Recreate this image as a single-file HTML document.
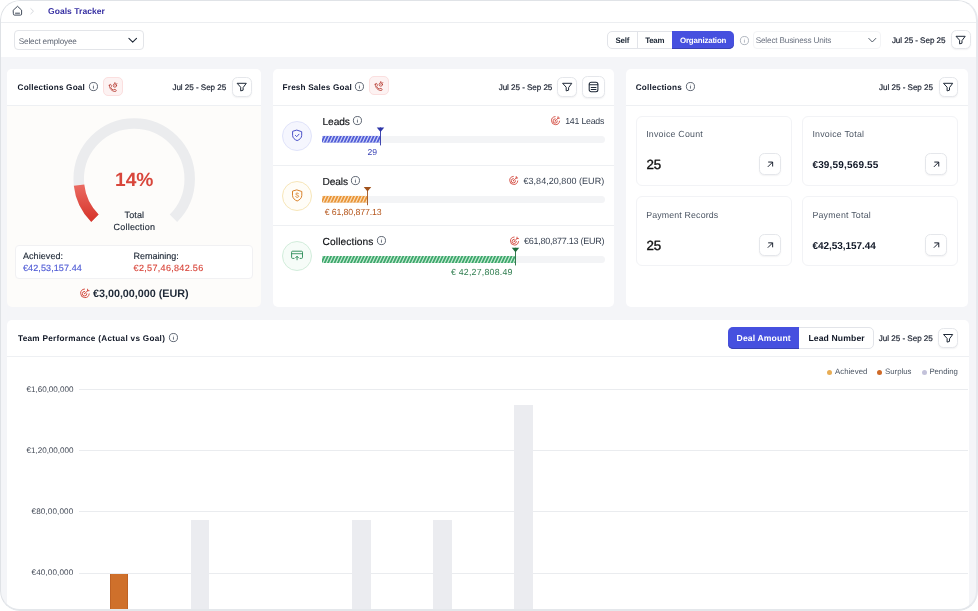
<!DOCTYPE html>
<html lang="en"><head><meta charset="utf-8"><title>Goals Tracker</title>
<style>
*{box-sizing:border-box;margin:0;padding:0}
html,body{width:978px;height:611px;background:#fff;overflow:hidden}
body{font-family:"Liberation Sans",sans-serif;position:relative}
#frame{position:absolute;left:0;top:0;width:978px;height:611px;border-radius:20px;overflow:hidden;background:#f4f5f8}
#frame:after{content:"";position:absolute;left:0;top:0;right:0;bottom:0;border:solid #e2e5e9;border-color:#e0e3e7 #e7e9ee #e4e7eb #dfe2e6;border-width:1px 2px 2.4px 1.4px;border-radius:20px;pointer-events:none;z-index:50}
.abs,.btn,.rbtn,.sub,.circ,.dot,svg{position:absolute}
.btn{background:#fff;border:1px solid #e5e7eb;border-radius:4.5px;box-shadow:0 1px 1.5px rgba(16,24,40,.05)}
.rbtn{background:#fdf2f2;border:1px solid #fbdfdf;border-radius:5px}
.sub{background:#fff;border:1px solid #f2f3f6;border-radius:6px}
.circ{border-radius:50%;border:1px solid}
.dot{width:5px;height:5px;border-radius:50%}
#gfx{left:0;top:0;z-index:5}
#txt{left:0;top:0;width:978px;height:611px;z-index:10;will-change:transform;text-rendering:geometricPrecision}

</style></head>
<body>
<div id="frame">
<div class="abs" style="left:0.00px;top:0.00px;width:978.00px;height:22.00px;background:#fff"></div>
<div class="abs" style="left:0.00px;top:22.00px;width:978.00px;height:1.00px;background:#eceef1"></div>
<div class="abs" style="left:0.00px;top:23.00px;width:978.00px;height:34.00px;background:#fff"></div>
<div class="abs" style="left:14.30px;top:30.30px;width:130.10px;height:19.40px;border:1px solid #e3e5e9;border-radius:4px;background:#fff"></div>
<div class="abs" style="left:607.20px;top:31.10px;width:126.80px;height:18.20px;border:1px solid #e2e4e9;border-radius:5px;background:#fff"></div>
<div class="abs" style="left:637.00px;top:31.60px;width:1.00px;height:17.20px;background:#e2e4e9"></div>
<div class="abs" style="left:672.20px;top:31.10px;width:61.80px;height:18.20px;background:#4650df;border-radius:0 5px 5px 0;box-shadow:inset 0 -1px 0 #3a41b4"></div>
<div class="abs" style="left:753.20px;top:31.00px;width:127.90px;height:18.10px;border:1px solid #f3f4f6;border-radius:4px;background:#fff"></div>
<div class="btn" style="left:951.00px;top:30.20px;width:19.50px;height:19.30px;border-radius:5.5px"></div>
<div class="abs" style="left:7.00px;top:69.00px;width:254.00px;height:238.20px;background:#fdfcfa;border-radius:5px"></div>
<div class="abs" style="left:7.00px;top:69.00px;width:254.00px;height:36.00px;background:#fff;border-radius:5px 5px 0 0"></div>
<div class="abs" style="left:7.00px;top:105.00px;width:254.00px;height:1.00px;background:#eef0f3"></div>
<div class="rbtn" style="left:103.30px;top:77.00px;width:19.40px;height:19.40px"></div>
<div class="btn" style="left:232.00px;top:77.30px;width:19.70px;height:19.50px;border-radius:5.5px"></div>
<div class="abs" style="left:15.00px;top:245.00px;width:238.00px;height:34.00px;background:#fff;border:1px solid #f1f1f3;border-radius:4px"></div>
<div class="abs" style="left:272.80px;top:69.00px;width:341.20px;height:238.20px;background:#fff;border-radius:5px"></div>
<div class="abs" style="left:272.80px;top:105.00px;width:341.20px;height:1.00px;background:#eef0f3"></div>
<div class="abs" style="left:272.80px;top:165.00px;width:341.20px;height:1.00px;background:#eef0f3"></div>
<div class="abs" style="left:272.80px;top:225.00px;width:341.20px;height:1.00px;background:#eef0f3"></div>
<div class="rbtn" style="left:369.20px;top:76.00px;width:19.40px;height:19.30px"></div>
<div class="btn" style="left:557.40px;top:77.20px;width:19.90px;height:19.60px;border-radius:5.5px"></div>
<div class="btn" style="left:582.40px;top:75.70px;width:22.20px;height:22.00px;border-radius:5.5px"></div>
<div class="circ" style="left:282.3px;top:120.7px;width:30px;height:30px;background:#f5f6fe;border-color:#e0e3fa"></div>
<div class="abs" style="left:322.00px;top:135.80px;width:282.80px;height:7.00px;background:#f3f4f6;border-radius:3.5px"></div>
<div class="circ" style="left:282.3px;top:180.5px;width:30px;height:30px;background:#fffdf7;border-color:#f7e6b8"></div>
<div class="abs" style="left:322.00px;top:195.80px;width:282.80px;height:7.00px;background:#f3f4f6;border-radius:3.5px"></div>
<div class="circ" style="left:282.3px;top:240.8px;width:30px;height:30px;background:#f6fcf8;border-color:#d2eddb"></div>
<div class="abs" style="left:322.00px;top:256.00px;width:282.80px;height:7.00px;background:#f3f4f6;border-radius:3.5px"></div>
<div class="abs" style="left:626.20px;top:69.00px;width:342.30px;height:238.20px;background:#fff;border-radius:5px"></div>
<div class="abs" style="left:626.20px;top:105.00px;width:342.30px;height:1.00px;background:#eef0f3"></div>
<div class="btn" style="left:938.50px;top:77.30px;width:19.60px;height:19.50px;border-radius:5.5px"></div>
<div class="sub" style="left:635.5px;top:115.6px;width:156.0px;height:70.2px"></div>
<div class="sub" style="left:635.5px;top:196.3px;width:156.0px;height:70.1px"></div>
<div class="sub" style="left:801.5px;top:115.6px;width:156.6px;height:70.2px"></div>
<div class="sub" style="left:801.5px;top:196.3px;width:156.6px;height:70.1px"></div>
<div class="btn" style="left:759.10px;top:153.10px;width:22.20px;height:22.40px;border-radius:5.5px"></div>
<div class="btn" style="left:759.10px;top:233.90px;width:22.20px;height:22.40px;border-radius:5.5px"></div>
<div class="btn" style="left:925.20px;top:153.10px;width:22.20px;height:22.40px;border-radius:5.5px"></div>
<div class="btn" style="left:925.20px;top:233.90px;width:22.20px;height:22.40px;border-radius:5.5px"></div>
<div class="abs" style="left:7.00px;top:320.00px;width:961.50px;height:320.00px;background:#fff;border-radius:5px"></div>
<div class="abs" style="left:7.00px;top:356.20px;width:961.50px;height:1.00px;background:#eef0f3"></div>
<div class="abs" style="left:728.00px;top:326.70px;width:145.50px;height:22.60px;border:1px solid #e2e4e9;border-radius:5px;background:#fff"></div>
<div class="abs" style="left:728.00px;top:326.70px;width:71.40px;height:22.60px;background:#4650df;border-radius:5px 0 0 5px;box-shadow:inset 0 -1px 0 #3a41b4"></div>
<div class="btn" style="left:938.40px;top:328.40px;width:19.60px;height:19.40px;border-radius:5.5px"></div>
<div class="dot" style="left:827.4px;top:369.5px;background:#e8ad55"></div>
<div class="dot" style="left:877.4px;top:369.5px;background:#cf6a28"></div>
<div class="dot" style="left:921.5px;top:369.5px;background:#c3c2da"></div>
<div class="abs" style="left:78.70px;top:389.00px;width:889.80px;height:1.00px;background:#eaecef"></div>
<div class="abs" style="left:78.70px;top:450.00px;width:889.80px;height:1.00px;background:#eaecef"></div>
<div class="abs" style="left:78.70px;top:511.00px;width:889.80px;height:1.00px;background:#eaecef"></div>
<div class="abs" style="left:78.70px;top:573.00px;width:889.80px;height:1.00px;background:#eaecef"></div>
<div class="abs" style="left:109.90px;top:574.00px;width:18.10px;height:66.00px;background:#cf702b;border-left:1px solid #bf6224;border-right:1px solid #bf6224"></div>
<div class="abs" style="left:190.70px;top:520.40px;width:18.60px;height:119.60px;background:#ebecf0"></div>
<div class="abs" style="left:352.30px;top:520.40px;width:18.60px;height:119.60px;background:#ebecf0"></div>
<div class="abs" style="left:433.00px;top:520.40px;width:18.60px;height:119.60px;background:#ebecf0"></div>
<div class="abs" style="left:514.10px;top:404.80px;width:18.70px;height:235.20px;background:#ebecf0"></div>
<svg id="gfx" width="978" height="611" viewBox="0 0 978 611">
<g transform="translate(11.50 4.80)" fill="none" stroke="#374151" stroke-width="0.95" stroke-linejoin="round" stroke-linecap="round"><path d="M1.9 5.3 L6 1.5 L10.1 5.3 V9.3 a1 1 0 0 1 -1 1 H2.9 a1 1 0 0 1 -1 -1 Z"/><path d="M4.0 8.4 H8.0"/></g>
<g transform="translate(29.60 7.80)" fill="none" stroke="#d5d8dd" stroke-width="1" stroke-linecap="round" stroke-linejoin="round"><path d="M1.2 0.8 L3.9 3.4 L1.2 6"/></g>
<g transform="translate(127.90 37.40)" fill="none" stroke="#1f2937" stroke-width="1.1" stroke-linecap="round" stroke-linejoin="round"><path d="M1 1 L4.8 4.8 L8.6 1"/></g>
<g transform="translate(739.45 35.55)" fill="none" stroke="#9ca3af" stroke-width="0.8"><circle cx="5" cy="5" r="4.05"/><path d="M5 4.95 V6.7" stroke-linecap="round" stroke-width="0.75"/><circle cx="5" cy="3.5" r="0.42" fill="#9ca3af" stroke="none"/></g>
<g transform="translate(867.80 37.40)" fill="none" stroke="#4b5563" stroke-width="0.95" stroke-linecap="round" stroke-linejoin="round"><path d="M1 1 L4.5 4.6 L8.0 1"/></g>
<g transform="translate(955.30 35.00)" fill="none" stroke="#1f2937" stroke-width="1.0" stroke-linejoin="round" stroke-linecap="round"><path d="M1.1 1.3 H9.9 L6.7 5.6 V8.2 L4.3 8.9 V5.6 Z"/></g>
<g transform="translate(88.45 81.55)" fill="none" stroke="#374151" stroke-width="0.8"><circle cx="5" cy="5" r="4.05"/><path d="M5 4.95 V6.7" stroke-linecap="round" stroke-width="0.75"/><circle cx="5" cy="3.5" r="0.42" fill="#374151" stroke="none"/></g>
<g transform="translate(108.30 81.60)" fill="none" stroke="#b53a30" stroke-width="0.8" stroke-linecap="round" stroke-linejoin="round"><path d="M1.0 3.7 C0.9 2.6 2.7 2.4 2.9 3.5 L3.1 5.0 L2.4 5.7 C2.9 7.0 3.7 7.9 5.0 8.4 L5.7 7.7 L7.2 8.0 C8.3 8.2 8.1 10.0 7.0 9.9 C3.6 9.8 1.1 7.2 1.0 3.7 Z"/><circle cx="6.6" cy="3.9" r="1.7"/><circle cx="6.6" cy="3.9" r="0.45" fill="#b53a30" stroke="none"/><path d="M6.6 2.1 V0.9 M7.9 2.6 L8.6 1.9"/></g>
<g transform="translate(236.40 82.00)" fill="none" stroke="#1f2937" stroke-width="1.0" stroke-linejoin="round" stroke-linecap="round"><path d="M1.1 1.3 H9.9 L6.7 5.6 V8.2 L4.3 8.9 V5.6 Z"/></g>
<g transform="translate(64.00 110.00) translate(-64.00 -110.00)" fill="none">
<defs><linearGradient id="rg" x1="0" y1="0" x2="0" y2="1"><stop offset="0" stop-color="#ea6a61"/><stop offset="1" stop-color="#d8382e"/></linearGradient></defs>
<path d="M94.96 218.24 A55.5 55.5 0 1 1 173.44 218.24" stroke="#ebecee" stroke-width="10.5"/>
<path d="M94.96 218.24 A55.5 55.5 0 0 1 79.04 185.2" stroke="url(#rg)" stroke-width="10.5"/>
</g>
<g transform="translate(79.90 288.30)" fill="none" stroke="#d2473b" stroke-width="0.95" stroke-linecap="round"><path d="M9.3 5.6 A4.3 4.3 0 1 1 4.6 0.75"/><path d="M7.0 5.4 A2.3 2.3 0 1 1 4.8 3.1"/><circle cx="4.8" cy="5.3" r="0.7" fill="#d2473b" stroke="none"/><path d="M4.9 5.2 L7.6 2.5 M7.7 2.4 V0.9 M7.7 2.4 H9.2"/></g>
<g transform="translate(354.45 81.55)" fill="none" stroke="#374151" stroke-width="0.8"><circle cx="5" cy="5" r="4.05"/><path d="M5 4.95 V6.7" stroke-linecap="round" stroke-width="0.75"/><circle cx="5" cy="3.5" r="0.42" fill="#374151" stroke="none"/></g>
<g transform="translate(374.20 80.60)" fill="none" stroke="#b53a30" stroke-width="0.8" stroke-linecap="round" stroke-linejoin="round"><path d="M1.0 3.7 C0.9 2.6 2.7 2.4 2.9 3.5 L3.1 5.0 L2.4 5.7 C2.9 7.0 3.7 7.9 5.0 8.4 L5.7 7.7 L7.2 8.0 C8.3 8.2 8.1 10.0 7.0 9.9 C3.6 9.8 1.1 7.2 1.0 3.7 Z"/><circle cx="6.6" cy="3.9" r="1.7"/><circle cx="6.6" cy="3.9" r="0.45" fill="#b53a30" stroke="none"/><path d="M6.6 2.1 V0.9 M7.9 2.6 L8.6 1.9"/></g>
<g transform="translate(561.90 82.00)" fill="none" stroke="#1f2937" stroke-width="1.0" stroke-linejoin="round" stroke-linecap="round"><path d="M1.1 1.3 H9.9 L6.7 5.6 V8.2 L4.3 8.9 V5.6 Z"/></g>
<g transform="translate(588.00 81.00)" fill="none" stroke="#1f2937" stroke-width="1.05" stroke-linecap="round"><rect x="1.2" y="1.3" width="8.7" height="9.4" rx="2"/><path d="M1.4 3.8 H9.7 M3.2 6.5 H8 M3.2 8.5 H8"/></g>
<g transform="translate(291.60 129.20)" fill="none" stroke="#4a50c8" stroke-width="1.0" stroke-linecap="round" stroke-linejoin="round"><path d="M5.55 1.0 L10.1 2.5 V6.1 C10.1 8.8 7.9 10.5 5.55 11.4 C3.2 10.5 1.0 8.8 1.0 6.1 V2.5 Z"/><path d="M3.8 6.2 L5.1 7.5 L7.4 5.0"/></g>
<g transform="translate(322.00 135.80)"><defs><clipPath id="cp1"><rect x="0" y="0" width="58.40" height="7.0" rx="1.5"/></clipPath></defs><g clip-path="url(#cp1)"><rect x="0" y="0" width="58.40" height="7.0" fill="#515dd6"/><path d="M-2.50 7.50 L1.25 -0.5 M0.78 7.50 L4.53 -0.5 M4.06 7.50 L7.81 -0.5 M7.34 7.50 L11.09 -0.5 M10.62 7.50 L14.37 -0.5 M13.90 7.50 L17.65 -0.5 M17.18 7.50 L20.93 -0.5 M20.46 7.50 L24.21 -0.5 M23.74 7.50 L27.49 -0.5 M27.02 7.50 L30.77 -0.5 M30.30 7.50 L34.05 -0.5 M33.58 7.50 L37.33 -0.5 M36.86 7.50 L40.61 -0.5 M40.14 7.50 L43.89 -0.5 M43.42 7.50 L47.17 -0.5 M46.70 7.50 L50.45 -0.5 M49.98 7.50 L53.73 -0.5 M53.26 7.50 L57.01 -0.5 M56.54 7.50 L60.29 -0.5" stroke="#cfd4f8" stroke-width="1.2" fill="none"/></g></g>
<g transform="translate(376.50 127.40)"><path d="M0.25 0 H7.75 L4 4.5 Z" fill="#2d35a8"/><rect x="3.55" y="0" width="0.9" height="18.00" fill="#2d35a8"/></g>
<g transform="translate(550.80 115.90) scale(0.9400 0.9400)" fill="none" stroke="#d2473b" stroke-width="0.95" stroke-linecap="round"><path d="M9.3 5.6 A4.3 4.3 0 1 1 4.6 0.75"/><path d="M7.0 5.4 A2.3 2.3 0 1 1 4.8 3.1"/><circle cx="4.8" cy="5.3" r="0.7" fill="#d2473b" stroke="none"/><path d="M4.9 5.2 L7.6 2.5 M7.7 2.4 V0.9 M7.7 2.4 H9.2"/></g>
<g transform="translate(352.45 115.55)" fill="none" stroke="#374151" stroke-width="0.8"><circle cx="5" cy="5" r="4.05"/><path d="M5 4.95 V6.7" stroke-linecap="round" stroke-width="0.75"/><circle cx="5" cy="3.5" r="0.42" fill="#374151" stroke="none"/></g>
<g transform="translate(291.50 189.00)" fill="none" stroke="#d9822b" stroke-width="1.0" stroke-linecap="round" stroke-linejoin="round"><path d="M5.65 1.0 L10.3 2.5 V6.3 C10.3 9.2 8.0 11.0 5.65 12.0 C3.3 11.0 1.0 9.2 1.0 6.3 V2.5 Z"/><path d="M7.1 4.7 C6.7 3.7 4.3 3.8 4.3 5.0 C4.3 6.4 7.2 5.8 7.2 7.3 C7.2 8.6 4.6 8.7 4.1 7.6" stroke-width="0.9"/></g>
<g transform="translate(322.00 195.80)"><defs><clipPath id="cp2"><rect x="0" y="0" width="45.30" height="7.0" rx="1.5"/></clipPath></defs><g clip-path="url(#cp2)"><rect x="0" y="0" width="45.30" height="7.0" fill="#e99538"/><path d="M-2.50 7.50 L1.25 -0.5 M0.78 7.50 L4.53 -0.5 M4.06 7.50 L7.81 -0.5 M7.34 7.50 L11.09 -0.5 M10.62 7.50 L14.37 -0.5 M13.90 7.50 L17.65 -0.5 M17.18 7.50 L20.93 -0.5 M20.46 7.50 L24.21 -0.5 M23.74 7.50 L27.49 -0.5 M27.02 7.50 L30.77 -0.5 M30.30 7.50 L34.05 -0.5 M33.58 7.50 L37.33 -0.5 M36.86 7.50 L40.61 -0.5 M40.14 7.50 L43.89 -0.5 M43.42 7.50 L47.17 -0.5" stroke="#f9dfbe" stroke-width="1.2" fill="none"/></g></g>
<g transform="translate(363.50 187.00)"><path d="M0.25 0 H7.75 L4 4.5 Z" fill="#a0521c"/><rect x="3.55" y="0" width="0.9" height="18.20" fill="#a0521c"/></g>
<g transform="translate(509.00 175.70) scale(0.9400 0.9400)" fill="none" stroke="#d2473b" stroke-width="0.95" stroke-linecap="round"><path d="M9.3 5.6 A4.3 4.3 0 1 1 4.6 0.75"/><path d="M7.0 5.4 A2.3 2.3 0 1 1 4.8 3.1"/><circle cx="4.8" cy="5.3" r="0.7" fill="#d2473b" stroke="none"/><path d="M4.9 5.2 L7.6 2.5 M7.7 2.4 V0.9 M7.7 2.4 H9.2"/></g>
<g transform="translate(350.45 175.55)" fill="none" stroke="#374151" stroke-width="0.8"><circle cx="5" cy="5" r="4.05"/><path d="M5 4.95 V6.7" stroke-linecap="round" stroke-width="0.75"/><circle cx="5" cy="3.5" r="0.42" fill="#374151" stroke="none"/></g>
<g transform="translate(290.60 250.20)" fill="none" stroke="#2f8f5b" stroke-width="0.95" stroke-linecap="round" stroke-linejoin="round"><path d="M3.4 8.2 H2.0 a1 1 0 0 1 -1 -1 V2.0 a1 1 0 0 1 1 -1 H10.9 a1 1 0 0 1 1 1 V7.2 a1 1 0 0 1 -1 1 H9.5"/><path d="M1.2 3.5 H11.7" stroke-width="1.3" stroke-opacity="0.7"/><path d="M6.45 9.6 V6.3 M5.0 7.6 L6.45 6.1 L7.9 7.6"/></g>
<g transform="translate(322.00 256.00)"><defs><clipPath id="cp3"><rect x="0" y="0" width="193.30" height="7.0" rx="1.5"/></clipPath></defs><g clip-path="url(#cp3)"><rect x="0" y="0" width="193.30" height="7.0" fill="#3ea76c"/><path d="M-2.50 7.50 L1.25 -0.5 M0.78 7.50 L4.53 -0.5 M4.06 7.50 L7.81 -0.5 M7.34 7.50 L11.09 -0.5 M10.62 7.50 L14.37 -0.5 M13.90 7.50 L17.65 -0.5 M17.18 7.50 L20.93 -0.5 M20.46 7.50 L24.21 -0.5 M23.74 7.50 L27.49 -0.5 M27.02 7.50 L30.77 -0.5 M30.30 7.50 L34.05 -0.5 M33.58 7.50 L37.33 -0.5 M36.86 7.50 L40.61 -0.5 M40.14 7.50 L43.89 -0.5 M43.42 7.50 L47.17 -0.5 M46.70 7.50 L50.45 -0.5 M49.98 7.50 L53.73 -0.5 M53.26 7.50 L57.01 -0.5 M56.54 7.50 L60.29 -0.5 M59.82 7.50 L63.57 -0.5 M63.10 7.50 L66.85 -0.5 M66.38 7.50 L70.13 -0.5 M69.66 7.50 L73.41 -0.5 M72.94 7.50 L76.69 -0.5 M76.22 7.50 L79.97 -0.5 M79.50 7.50 L83.25 -0.5 M82.78 7.50 L86.53 -0.5 M86.06 7.50 L89.81 -0.5 M89.34 7.50 L93.09 -0.5 M92.62 7.50 L96.37 -0.5 M95.90 7.50 L99.65 -0.5 M99.18 7.50 L102.93 -0.5 M102.46 7.50 L106.21 -0.5 M105.74 7.50 L109.49 -0.5 M109.02 7.50 L112.77 -0.5 M112.30 7.50 L116.05 -0.5 M115.58 7.50 L119.33 -0.5 M118.86 7.50 L122.61 -0.5 M122.14 7.50 L125.89 -0.5 M125.42 7.50 L129.17 -0.5 M128.70 7.50 L132.45 -0.5 M131.98 7.50 L135.73 -0.5 M135.26 7.50 L139.01 -0.5 M138.54 7.50 L142.29 -0.5 M141.82 7.50 L145.57 -0.5 M145.10 7.50 L148.85 -0.5 M148.38 7.50 L152.13 -0.5 M151.66 7.50 L155.41 -0.5 M154.94 7.50 L158.69 -0.5 M158.22 7.50 L161.97 -0.5 M161.50 7.50 L165.25 -0.5 M164.78 7.50 L168.53 -0.5 M168.06 7.50 L171.81 -0.5 M171.34 7.50 L175.09 -0.5 M174.62 7.50 L178.37 -0.5 M177.90 7.50 L181.65 -0.5 M181.18 7.50 L184.93 -0.5 M184.46 7.50 L188.21 -0.5 M187.74 7.50 L191.49 -0.5 M191.02 7.50 L194.77 -0.5" stroke="#c9ecd6" stroke-width="1.2" fill="none"/></g></g>
<g transform="translate(511.50 247.80)"><path d="M0.25 0 H7.75 L4 4.5 Z" fill="#1f6b3c"/><rect x="3.55" y="0" width="0.9" height="17.60" fill="#1f6b3c"/></g>
<g transform="translate(509.80 236.30) scale(0.9400 0.9400)" fill="none" stroke="#d2473b" stroke-width="0.95" stroke-linecap="round"><path d="M9.3 5.6 A4.3 4.3 0 1 1 4.6 0.75"/><path d="M7.0 5.4 A2.3 2.3 0 1 1 4.8 3.1"/><circle cx="4.8" cy="5.3" r="0.7" fill="#d2473b" stroke="none"/><path d="M4.9 5.2 L7.6 2.5 M7.7 2.4 V0.9 M7.7 2.4 H9.2"/></g>
<g transform="translate(376.45 235.55)" fill="none" stroke="#374151" stroke-width="0.8"><circle cx="5" cy="5" r="4.05"/><path d="M5 4.95 V6.7" stroke-linecap="round" stroke-width="0.75"/><circle cx="5" cy="3.5" r="0.42" fill="#374151" stroke="none"/></g>
<g transform="translate(685.45 81.55)" fill="none" stroke="#374151" stroke-width="0.8"><circle cx="5" cy="5" r="4.05"/><path d="M5 4.95 V6.7" stroke-linecap="round" stroke-width="0.75"/><circle cx="5" cy="3.5" r="0.42" fill="#374151" stroke="none"/></g>
<g transform="translate(942.80 82.00)" fill="none" stroke="#1f2937" stroke-width="1.0" stroke-linejoin="round" stroke-linecap="round"><path d="M1.1 1.3 H9.9 L6.7 5.6 V8.2 L4.3 8.9 V5.6 Z"/></g>
<g transform="translate(766.30 160.40)" fill="none" stroke="#111827" stroke-width="0.95" stroke-linecap="butt" stroke-linejoin="miter"><path d="M1.5 6.5 L6.3 1.7 M1.9 1.65 H6.35 V6.1"/></g>
<g transform="translate(766.30 241.20)" fill="none" stroke="#111827" stroke-width="0.95" stroke-linecap="butt" stroke-linejoin="miter"><path d="M1.5 6.5 L6.3 1.7 M1.9 1.65 H6.35 V6.1"/></g>
<g transform="translate(932.40 160.40)" fill="none" stroke="#111827" stroke-width="0.95" stroke-linecap="butt" stroke-linejoin="miter"><path d="M1.5 6.5 L6.3 1.7 M1.9 1.65 H6.35 V6.1"/></g>
<g transform="translate(932.40 241.20)" fill="none" stroke="#111827" stroke-width="0.95" stroke-linecap="butt" stroke-linejoin="miter"><path d="M1.5 6.5 L6.3 1.7 M1.9 1.65 H6.35 V6.1"/></g>
<g transform="translate(168.45 332.55)" fill="none" stroke="#374151" stroke-width="0.8"><circle cx="5" cy="5" r="4.05"/><path d="M5 4.95 V6.7" stroke-linecap="round" stroke-width="0.75"/><circle cx="5" cy="3.5" r="0.42" fill="#374151" stroke="none"/></g>
<g transform="translate(942.80 333.20)" fill="none" stroke="#1f2937" stroke-width="1.0" stroke-linejoin="round" stroke-linecap="round"><path d="M1.1 1.3 H9.9 L6.7 5.6 V8.2 L4.3 8.9 V5.6 Z"/></g>
</svg>
<svg id="txt" width="978" height="611" viewBox="0 0 978 611" font-family="'Liberation Sans', sans-serif">
<text x="48.00" y="14" font-size="8.5" font-weight="700" fill="#3730a3" letter-spacing="0.051">Goals Tracker</text>
<text x="18.80" y="44" font-size="8.2" fill="#5f6673" letter-spacing="-0.175">Select employee</text>
<text x="615.60" y="43" font-size="7.9" font-weight="700" fill="#1f2937" letter-spacing="-0.246">Self</text>
<text x="645.20" y="43" font-size="7.9" font-weight="700" fill="#1f2937" letter-spacing="-0.233">Team</text>
<text x="680.00" y="43" font-size="7.9" font-weight="700" fill="#ffffff" letter-spacing="-0.170">Organization</text>
<text x="755.70" y="43" font-size="8.2" fill="#6b7280" letter-spacing="-0.171">Select Business Units</text>
<text x="891.90" y="43" font-size="8.1" fill="#1a2130" letter-spacing="-0.064" stroke="#1a2130" stroke-width="0.2">Jul 25 - Sep 25</text>
<text x="17.60" y="90" font-size="8.2" font-weight="700" fill="#111827" letter-spacing="0.174">Collections Goal</text>
<text x="172.40" y="90" font-size="8.1" fill="#1a2130" letter-spacing="-0.044" stroke="#1a2130" stroke-width="0.2">Jul 25 - Sep 25</text>
<text x="115.00" y="186" font-size="19.2" font-weight="700" fill="#d8463b" letter-spacing="-0.002">14%</text>
<text x="124.60" y="218" font-size="9" fill="#1f2937" letter-spacing="0.097" stroke="#1f2937" stroke-width="0.15">Total</text>
<text x="113.60" y="230" font-size="9" fill="#1f2937" letter-spacing="0.197" stroke="#1f2937" stroke-width="0.15">Collection</text>
<text x="22.90" y="259" font-size="9" fill="#1f2937" letter-spacing="0.085" stroke="#1f2937" stroke-width="0.15">Achieved:</text>
<text x="22.90" y="271" font-size="9" fill="#4f5bd5" letter-spacing="0.118" stroke="#4f5bd5" stroke-width="0.15">€42,53,157.44</text>
<text x="133.60" y="259" font-size="9" fill="#1f2937" letter-spacing="-0.053" stroke="#1f2937" stroke-width="0.15">Remaining:</text>
<text x="133.60" y="271" font-size="9" fill="#d8463b" letter-spacing="0.323" stroke="#d8463b" stroke-width="0.15">€2,57,46,842.56</text>
<text x="93.00" y="297" font-size="10.8" font-weight="700" fill="#1f2937" letter-spacing="-0.024">€3,00,00,000 (EUR)</text>
<text x="282.60" y="90" font-size="8.2" font-weight="700" fill="#111827" letter-spacing="0.178">Fresh Sales Goal</text>
<text x="498.70" y="90" font-size="8.1" fill="#1a2130" letter-spacing="-0.057" stroke="#1a2130" stroke-width="0.2">Jul 25 - Sep 25</text>
<text x="322.50" y="125" font-size="10.2" fill="#0f1115" letter-spacing="-0.073" stroke="#0f1115" stroke-width="0.15">Leads</text>
<text x="565.20" y="124" font-size="8.8" fill="#374151" letter-spacing="-0.233">141 Leads</text>
<text x="367.60" y="155" font-size="8.6" fill="#3a43b5" letter-spacing="-0.181">29</text>
<text x="322.50" y="185" font-size="10.2" fill="#0f1115" letter-spacing="-0.109" stroke="#0f1115" stroke-width="0.15">Deals</text>
<text x="523.50" y="184" font-size="9" fill="#374151" letter-spacing="0.036">€3,84,20,800 (EUR)</text>
<text x="324.70" y="215" font-size="8.8" fill="#b5561c" letter-spacing="-0.129">€ 61,80,877.13</text>
<text x="322.50" y="245" font-size="10.2" fill="#0f1115" letter-spacing="0.114" stroke="#0f1115" stroke-width="0.15">Collections</text>
<text x="523.90" y="244" font-size="9" fill="#374151" letter-spacing="-0.251">€61,80,877.13 (EUR)</text>
<text x="451.00" y="275" font-size="8.8" fill="#2f7d4f" letter-spacing="0.207">€ 42,27,808.49</text>
<text x="635.70" y="90" font-size="8.2" font-weight="700" fill="#111827" letter-spacing="0.196">Collections</text>
<text x="879.00" y="90" font-size="8.1" fill="#1a2130" letter-spacing="-0.030" stroke="#1a2130" stroke-width="0.2">Jul 25 - Sep 25</text>
<text x="646.20" y="137" font-size="8.8" fill="#4b5563" letter-spacing="0.231">Invoice Count</text>
<text x="646.60" y="169" font-size="13.3" fill="#111111" letter-spacing="-0.248" stroke="#111111" stroke-width="0.4">25</text>
<text x="812.40" y="137" font-size="8.8" fill="#4b5563" letter-spacing="0.242">Invoice Total</text>
<text x="812.40" y="168" font-size="10" font-weight="700" fill="#111827" letter-spacing="0.173">€39,59,569.55</text>
<text x="646.20" y="218" font-size="8.8" fill="#4b5563" letter-spacing="0.152">Payment Records</text>
<text x="646.60" y="250" font-size="13.3" fill="#111111" letter-spacing="-0.248" stroke="#111111" stroke-width="0.4">25</text>
<text x="812.40" y="218" font-size="8.8" fill="#4b5563" letter-spacing="0.231">Payment Total</text>
<text x="812.40" y="249" font-size="10" font-weight="700" fill="#111827" letter-spacing="-0.043">€42,53,157.44</text>
<text x="18.00" y="341" font-size="8.2" font-weight="700" fill="#111827" letter-spacing="0.287">Team Performance (Actual vs Goal)</text>
<text x="736.60" y="341" font-size="8.6" font-weight="700" fill="#ffffff" letter-spacing="0.137">Deal Amount</text>
<text x="808.40" y="341" font-size="8.6" font-weight="700" fill="#111827" letter-spacing="0.134">Lead Number</text>
<text x="878.80" y="341" font-size="8.1" fill="#1a2130" letter-spacing="-0.030" stroke="#1a2130" stroke-width="0.2">Jul 25 - Sep 25</text>
<text x="835.00" y="374" font-size="7.8" fill="#4b5563" letter-spacing="0.040">Achieved</text>
<text x="885.00" y="374" font-size="7.8" fill="#4b5563" letter-spacing="0.009">Surplus</text>
<text x="929.40" y="374" font-size="7.8" fill="#4b5563" letter-spacing="-0.032">Pending</text>
<text x="26.60" y="392" font-size="8.1" fill="#434a57" letter-spacing="-0.039">€1,60,00,000</text>
<text x="26.60" y="453" font-size="8.1" fill="#434a57" letter-spacing="-0.039">€1,20,00,000</text>
<text x="31.60" y="514" font-size="8.1" fill="#434a57" letter-spacing="0.128">€80,00,000</text>
<text x="31.60" y="575" font-size="8.1" fill="#434a57" letter-spacing="0.128">€40,00,000</text>
</svg>
</div>
</body></html>
